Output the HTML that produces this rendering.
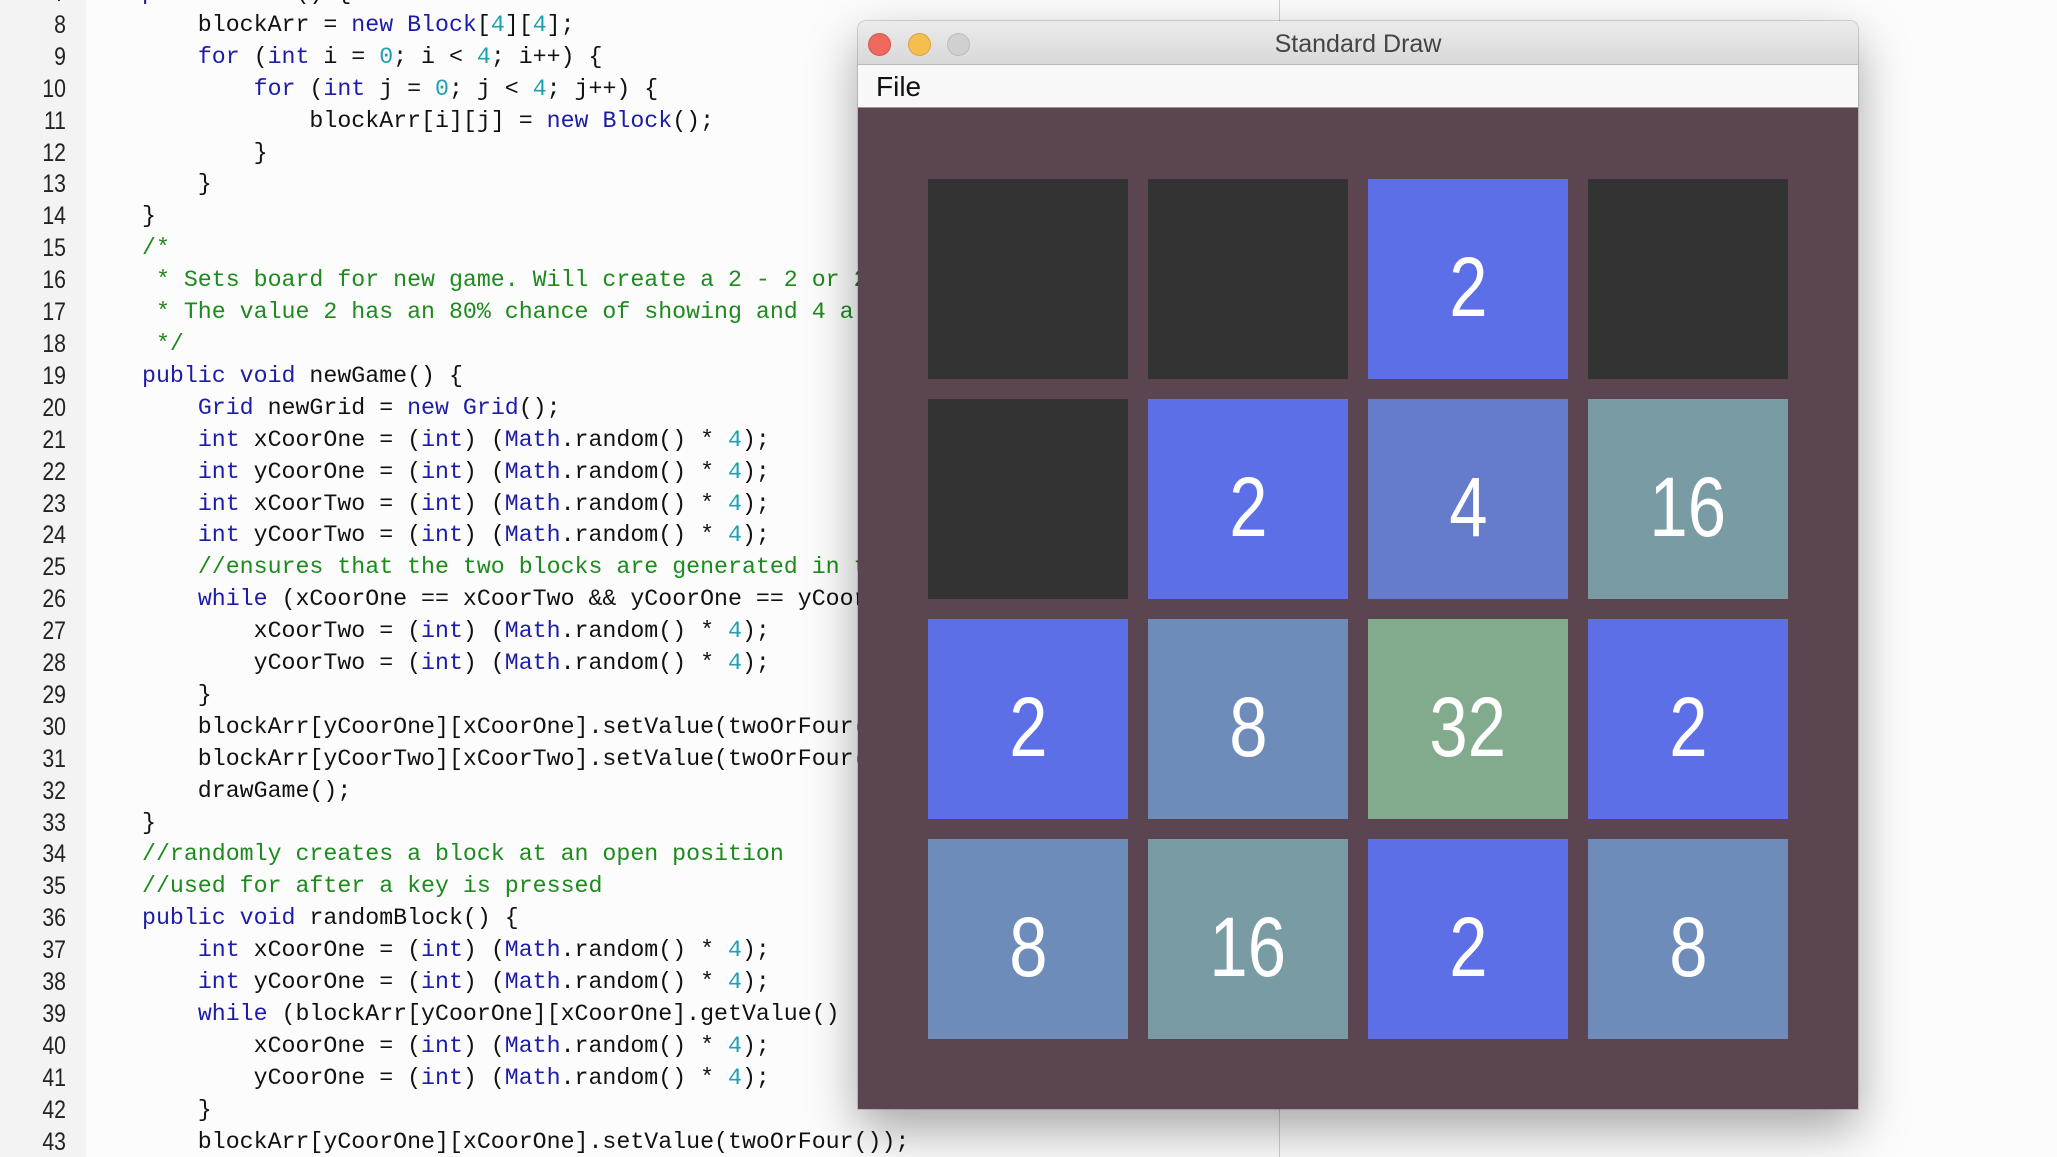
<!DOCTYPE html>
<html><head><meta charset="utf-8">
<style>
html,body{margin:0;padding:0;width:2057px;height:1157px;overflow:hidden;background:#fcfcfc;position:relative;font-family:"Liberation Sans",sans-serif;}
.gutter{position:absolute;left:0;top:0;width:86px;height:1157px;background:#f3f3f3;}
.nums{position:absolute;left:0;top:-22px;width:66px;text-align:right;font:25px/31.9px "Liberation Sans",sans-serif;color:#222;transform:scaleX(0.85);transform-origin:right;}
.code{position:absolute;left:142px;top:-22px;margin:0;font:23.25px/31.9px "Liberation Mono",monospace;color:#111;white-space:pre;}
.k{color:#1c1ca8}.n{color:#1ea0b0}.c{color:#1c8a1c}
.vline{position:absolute;left:1279px;top:0;width:1px;height:1157px;background:#d0d0d0;}
.win{position:absolute;left:858px;top:21px;width:1000px;height:1088px;border-radius:8px 8px 0 0;overflow:hidden;box-shadow:0 20px 50px rgba(0,0,0,0.35),0 0 0 1px rgba(0,0,0,0.15);}
.title{position:absolute;left:0;top:0;width:1000px;height:43px;background:linear-gradient(#ececec,#d8d8d8);border-bottom:1px solid #b8b8b8;text-align:center;font-size:25px;line-height:46px;color:#444;}
.dot{position:absolute;top:12px;width:21px;height:21px;border-radius:50%;}
.menu{position:absolute;left:0;top:44px;width:1000px;height:42px;background:#f8f8f8;border-bottom:1px solid #999;font-size:28px;line-height:44px;color:#111;}
.board{position:absolute;left:0;top:87px;width:1000px;height:1001px;background:#5a4550;}
.t{position:absolute;width:200px;height:200px;color:#fff;text-align:center;font-size:84px;line-height:216px;}
.t span{display:inline-block;transform:scaleX(0.82);}
</style></head><body>
<div class="gutter"></div>
<div class="nums">7<br>8<br>9<br>10<br>11<br>12<br>13<br>14<br>15<br>16<br>17<br>18<br>19<br>20<br>21<br>22<br>23<br>24<br>25<br>26<br>27<br>28<br>29<br>30<br>31<br>32<br>33<br>34<br>35<br>36<br>37<br>38<br>39<br>40<br>41<br>42<br>43</div>
<pre class="code"><span class="k">public</span> Grid() {
    blockArr = <span class="k">new</span> <span class="k">Block</span>[<span class="n">4</span>][<span class="n">4</span>];
    <span class="k">for</span> (<span class="k">int</span> i = <span class="n">0</span>; i &lt; <span class="n">4</span>; i++) {
        <span class="k">for</span> (<span class="k">int</span> j = <span class="n">0</span>; j &lt; <span class="n">4</span>; j++) {
            blockArr[i][j] = <span class="k">new</span> <span class="k">Block</span>();
        }
    }
}
<span class="c">/*</span>
<span class="c"> * Sets board for new game. Will create a 2 - 2 or 2 - 4 board</span>
<span class="c"> * The value 2 has an 80% chance of showing and 4 a 20% chance</span>
<span class="c"> */</span>
<span class="k">public void</span> newGame() {
    <span class="k">Grid</span> newGrid = <span class="k">new</span> <span class="k">Grid</span>();
    <span class="k">int</span> xCoorOne = (<span class="k">int</span>) (<span class="k">Math</span>.random() * <span class="n">4</span>);
    <span class="k">int</span> yCoorOne = (<span class="k">int</span>) (<span class="k">Math</span>.random() * <span class="n">4</span>);
    <span class="k">int</span> xCoorTwo = (<span class="k">int</span>) (<span class="k">Math</span>.random() * <span class="n">4</span>);
    <span class="k">int</span> yCoorTwo = (<span class="k">int</span>) (<span class="k">Math</span>.random() * <span class="n">4</span>);
    <span class="c">//ensures that the two blocks are generated in two places</span>
    <span class="k">while</span> (xCoorOne == xCoorTwo &amp;&amp; yCoorOne == yCoorTwo) {
        xCoorTwo = (<span class="k">int</span>) (<span class="k">Math</span>.random() * <span class="n">4</span>);
        yCoorTwo = (<span class="k">int</span>) (<span class="k">Math</span>.random() * <span class="n">4</span>);
    }
    blockArr[yCoorOne][xCoorOne].setValue(twoOrFour());
    blockArr[yCoorTwo][xCoorTwo].setValue(twoOrFour());
    drawGame();
}
<span class="c">//randomly creates a block at an open position</span>
<span class="c">//used for after a key is pressed</span>
<span class="k">public void</span> randomBlock() {
    <span class="k">int</span> xCoorOne = (<span class="k">int</span>) (<span class="k">Math</span>.random() * <span class="n">4</span>);
    <span class="k">int</span> yCoorOne = (<span class="k">int</span>) (<span class="k">Math</span>.random() * <span class="n">4</span>);
    <span class="k">while</span> (blockArr[yCoorOne][xCoorOne].getValue() != 0) {
        xCoorOne = (<span class="k">int</span>) (<span class="k">Math</span>.random() * <span class="n">4</span>);
        yCoorOne = (<span class="k">int</span>) (<span class="k">Math</span>.random() * <span class="n">4</span>);
    }
    blockArr[yCoorOne][xCoorOne].setValue(twoOrFour());</pre>
<div class="vline"></div>
<div class="win">
  <div class="title">Standard Draw
    <div class="dot" style="left:10px;background:#ee6a5e;border:1px solid #d5564c;"></div>
    <div class="dot" style="left:50px;background:#f5bf4f;border:1px solid #d9a53b;"></div>
    <div class="dot" style="left:89px;background:#d0d0d0;border:1px solid #bdbdbd;"></div>
  </div>
  <div class="menu"><span style="margin-left:18px">File</span></div>
  <div class="board">
    <div class="t" style="left:70px;top:71px;background:#333333"></div>
    <div class="t" style="left:290px;top:71px;background:#333333"></div>
    <div class="t" style="left:510px;top:71px;background:#5c6fe6"><span>2</span></div>
    <div class="t" style="left:730px;top:71px;background:#333333"></div>

    <div class="t" style="left:70px;top:291px;background:#333333"></div>
    <div class="t" style="left:290px;top:291px;background:#5c6fe6"><span>2</span></div>
    <div class="t" style="left:510px;top:291px;background:#647ccb"><span>4</span></div>
    <div class="t" style="left:730px;top:291px;background:#799ca4"><span>16</span></div>

    <div class="t" style="left:70px;top:511px;background:#5c6fe6"><span>2</span></div>
    <div class="t" style="left:290px;top:511px;background:#6d8cba"><span>8</span></div>
    <div class="t" style="left:510px;top:511px;background:#82aa8c"><span>32</span></div>
    <div class="t" style="left:730px;top:511px;background:#5c6fe6"><span>2</span></div>

    <div class="t" style="left:70px;top:731px;background:#6d8cba"><span>8</span></div>
    <div class="t" style="left:290px;top:731px;background:#799ca4"><span>16</span></div>
    <div class="t" style="left:510px;top:731px;background:#5c6fe6"><span>2</span></div>
    <div class="t" style="left:730px;top:731px;background:#6d8cba"><span>8</span></div>
  </div>
</div>
</body></html>
